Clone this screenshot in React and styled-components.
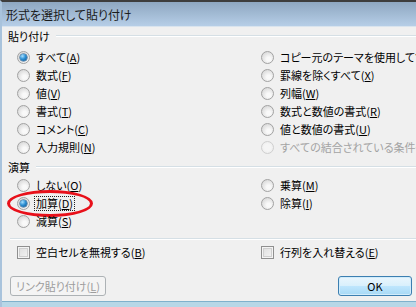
import React from "react";
import styled, { createGlobalStyle, css } from "styled-components";

const GlobalStyle = createGlobalStyle`
  html, body {
    margin: 0;
    padding: 0;
    background: #f0f0f0;
  }
  body {
    font-family: "Noto Sans CJK JP", "Noto Sans", sans-serif;
    font-feature-settings: "palt";
  }
`;

const Window = styled.div`
  width: 416px;
  height: 307px;
  display: flex;
  flex-direction: column;
  overflow: hidden;
  box-sizing: border-box;
  border-top: 2px solid #3d3d3d;
  border-left: 2px solid #a9c3dc;
  background: #f0f0f0;
`;

const TitleBar = styled.div`
  height: 24px;
  flex: none;
  display: flex;
  align-items: center;
  padding-left: 4px;
  font-size: 12px;
  color: #1b1b1b;
  background: linear-gradient(#8ea7c1, #b6cee7);
  border-bottom: 1px solid #d9e4ee;
`;

const Body = styled.div`
  flex: 1;
  display: flex;
  flex-direction: column;
  padding: 0 0 0 6px;
  font-size: 11px;
  color: #000;
`;

const GroupHeader = styled.div`
  height: 14px;
  margin-top: ${(p) => p.$top}px;
  display: flex;
  align-items: center;
  gap: 6px;
  white-space: nowrap;

  &::after {
    content: "";
    flex: 1;
    height: 0;
    border-top: 1px solid #d5dfe5;
    border-bottom: 1px solid #fff;
  }
`;

const OptionGrid = styled.div`
  margin-top: ${(p) => p.$top}px;
  padding-left: 9px;
  display: grid;
  grid-template-columns: 244px 1fr;
  grid-auto-flow: column;
  grid-template-rows: repeat(${(p) => p.$rows}, 18px);
`;

const Option = styled.div`
  position: relative;
  display: flex;
  align-items: center;
  gap: 5px;
  white-space: nowrap;
  color: ${(p) => (p.$disabled ? "#a3a3a3" : "#000")};
`;

const Radio = styled.span`
  flex: none;
  width: 13px;
  height: 13px;
  box-sizing: border-box;
  border-radius: 50%;
  border: 1px solid ${(p) => (p.$disabled ? "#cfcfcf" : "#a2a2a2")};
  background: ${(p) =>
    p.$disabled
      ? "radial-gradient(circle at 50% 50%, #f5f5f5 40%, #e9e9e9 100%)"
      : "radial-gradient(circle at 60% 65%, #f9f9f9 20%, #d6d6d6 85%)"};
  display: flex;
  align-items: center;
  justify-content: center;

  ${(p) =>
    p.$checked &&
    css`
      &::after {
        content: "";
        width: 7px;
        height: 7px;
        border-radius: 50%;
        background: radial-gradient(circle at 35% 30%, #a8e0ff 0%, #2c8fd3 45%, #0f4f89 100%);
        box-shadow: 0 0 0 0.5px #1d4e7c;
      }
    `}
`;

const Check = styled.span`
  flex: none;
  width: 13px;
  height: 13px;
  box-sizing: border-box;
  border: 1px solid #8f8f8f;
  background: linear-gradient(135deg, #dcdcdc, #f6f6f6);
  box-shadow: inset 0 0 0 1px #f4f4f4, inset 0 0 0 2px #cfcfcf;
`;

const Text = styled.span`
  line-height: 13px;
  padding: 0 1px;
  ${(p) =>
    p.$focus &&
    css`
      outline: 1px dotted #222;
      outline-offset: 0;
    `}
`;

const Highlight = styled.span`
  position: absolute;
  left: -10px;
  top: -4px;
  width: 86px;
  height: 27px;
  box-sizing: border-box;
  border: 3px solid #e8101a;
  border-radius: 50%;
  pointer-events: none;
`;

const Separator = styled.div`
  margin: 8px 0 0 2px;
  border-top: 1px solid #d5dfe5;
  border-bottom: 1px solid #fff;
`;

const Footer = styled.div`
  margin-top: 15px;
  padding: 0 4px 0 2px;
  display: flex;
  justify-content: space-between;
`;

const Button = styled.button`
  height: 20px;
  width: ${(p) => p.$w}px;
  box-sizing: border-box;
  padding: 0;
  font: inherit;
  font-size: 11px;
  border-radius: 3px;
  ${(p) =>
    p.$primary
      ? css`
          color: #000;
          border: 1px solid #3c7fb1;
          background: linear-gradient(#eaf6fd 0%, #d9f0fc 48%, #bee6fd 52%, #a7d9f5 100%);
          box-shadow: inset 0 0 0 1px #d1ecfb;
        `
      : css`
          color: #9d9d9d;
          border: 1px solid #adb2b5;
          background: #f4f4f4;
        `}
`;

const BottomFrame = styled.div`
  height: 5px;
  margin-top: 4px;
  flex: none;
  border-top: 1px solid #7fb1cc;
  background: #b7d7e7;
`;

const Mn = ({ k }) => (
  <>
    (<u>{k}</u>)
  </>
);

const pasteLeft = [
  ["すべて", "A", true],
  ["数式", "F"],
  ["値", "V"],
  ["書式", "T"],
  ["コメント", "C"],
  ["入力規則", "N"],
];

const pasteRight = [
  ["コピー元のテーマを使用してすべて貼り付け", "H"],
  ["罫線を除くすべて", "X"],
  ["列幅", "W"],
  ["数式と数値の書式", "R"],
  ["値と数値の書式", "U"],
  ["すべての結合されている条件付き書式", "G", false, true],
];

function RadioOption({ label, k, checked, disabled, focus, children }) {
  return (
    <Option $disabled={disabled}>
      <Radio $checked={checked} $disabled={disabled} />
      <Text $focus={focus}>
        {label}
        <Mn k={k} />
      </Text>
      {children}
    </Option>
  );
}

export default function App() {
  return (
    <>
      <GlobalStyle />
      <Window>
        <TitleBar>形式を選択して貼り付け</TitleBar>
        <Body>
          <GroupHeader $top={2}>貼り付け</GroupHeader>
          <OptionGrid $top={5} $rows={6}>
            {[...pasteLeft, ...pasteRight].map(([label, k, checked, disabled]) => (
              <RadioOption key={k} label={label} k={k} checked={checked} disabled={disabled} />
            ))}
          </OptionGrid>

          <GroupHeader $top={4}>演算</GroupHeader>
          <OptionGrid $top={2} $rows={3}>
            <RadioOption label="しない" k="O" />
            <RadioOption label="加算" k="D" checked focus>
              <Highlight />
            </RadioOption>
            <RadioOption label="減算" k="S" />
            <RadioOption label="乗算" k="M" />
            <RadioOption label="除算" k="I" />
          </OptionGrid>

          <Separator />

          <OptionGrid $top={3} $rows={1}>
            <Option>
              <Check />
              <Text>
                空白セルを無視する
                <Mn k="B" />
              </Text>
            </Option>
            <Option>
              <Check />
              <Text>
                行列を入れ替える
                <Mn k="E" />
              </Text>
            </Option>
          </OptionGrid>

          <Footer>
            <Button $w={96} disabled>
              リンク貼り付け(<u>L</u>)
            </Button>
            <Button $w={74} $primary>
              OK
            </Button>
          </Footer>
        </Body>
        <BottomFrame />
      </Window>
    </>
  );
}
